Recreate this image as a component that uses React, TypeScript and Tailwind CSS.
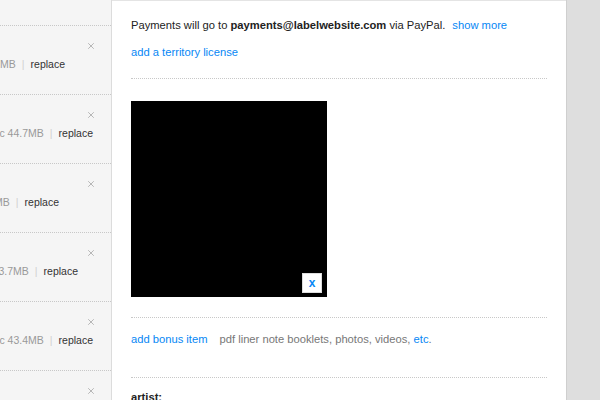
import { X } from 'lucide-react'

type Row = {
  size: string
  end: string
}

const rows: Row[] = [
  { size: '47.7MB', end: 'pr-[46px]' },
  { size: 'flac 44.7MB', end: 'pr-[18px]' },
  { size: '41.2MB', end: 'pr-[52px]' },
  { size: '43.7MB', end: 'pr-[33px]' },
  { size: 'flac 43.4MB', end: 'pr-[18px]' },
]

const TrackRow = ({ size, end }: Row) => {
  return (
    <div className="relative h-[69px] border-t border-dotted border-[#c8c8c8]">
      <X className="absolute right-[15px] top-[15px] h-[10px] w-[10px] text-[#aaa]" strokeWidth={2} />
      <div className={`absolute right-0 top-[31px] flex whitespace-nowrap text-[10.5px] leading-[14px] ${end}`}>
        <span className="text-[#999]">{size}</span>
        <span className="mx-[6px] text-[#d0d0d0]">|</span>
        <span className="text-[#333]">replace</span>
      </div>
    </div>
  )
}

export default function App() {
  return (
    <div
      className="flex h-[400px] w-[600px] overflow-hidden bg-white"
      style={{ fontFamily: '"Liberation Sans", Arial, sans-serif' }}
    >
      <div className="w-[112px] shrink-0 overflow-hidden border-r border-[#dcdcdc] bg-[#f5f5f5] pt-[25px]">
        {rows.map((r, i) => (
          <TrackRow key={i} {...r} />
        ))}
        <div className="relative h-[69px] border-t border-dotted border-[#c8c8c8]">
          <X className="absolute right-[15px] top-[15px] h-[10px] w-[10px] text-[#aaa]" strokeWidth={2} />
        </div>
      </div>

      <div className="w-[454px] shrink-0 border-t border-[#e4e4e4] px-[19px] pt-[16px] text-[11.2px] leading-[16px] text-[#222]">
        <p className="whitespace-nowrap">
          Payments will go to <b>payments@labelwebsite.com</b> via PayPal.
          <a className="ml-[7px] text-[#0687f5]">show more</a>
        </p>
        <p className="mt-[11px] text-[#0687f5]">add a territory license</p>

        <div className="mt-[18px] border-t border-dotted border-[#c8c8c8]" />

        <div className="relative mt-[22px] h-[196px] w-[196px] bg-black">
          <div className="absolute bottom-[4px] right-[5px] flex h-[20px] w-[20px] items-center justify-center border border-[#ddd] bg-white text-[12px] font-bold text-[#0687f5]">
            x
          </div>
        </div>

        <div className="mt-[20px] border-t border-dotted border-[#c8c8c8]" />

        <p className="mt-[13px]">
          <a className="text-[#0687f5]">add bonus item</a>
          <span className="ml-[12px] text-[#777]">
            pdf liner note booklets, photos, videos, <a className="text-[#0687f5]">etc</a>.
          </span>
        </p>

        <div className="mt-[30px] border-t border-dotted border-[#c8c8c8]" />

        <p className="mt-[11px] font-bold">artist:</p>
      </div>

      <div className="flex-1 border-l border-[#cfcfcf] bg-[#dedede]" />
    </div>
  )
}
